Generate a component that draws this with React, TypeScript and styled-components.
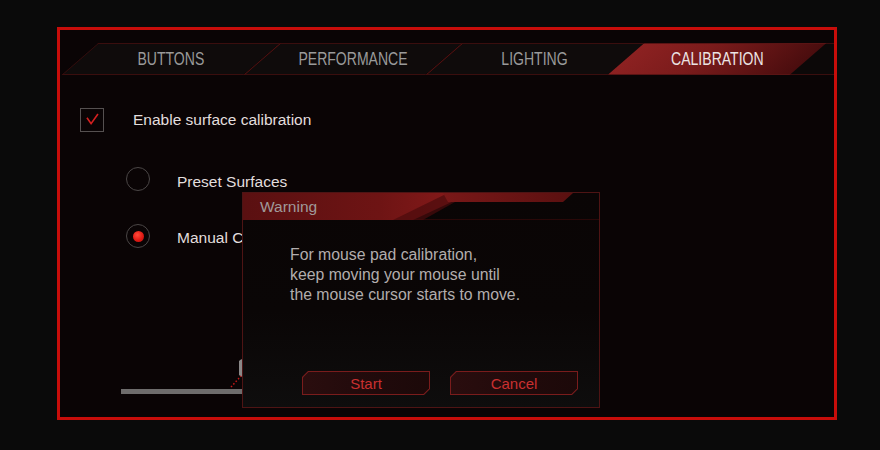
import React from "react";
import styled, { createGlobalStyle, css } from "styled-components";

const GlobalStyle = createGlobalStyle`
  html, body { margin: 0; padding: 0; background: #0a0a0a; }
  body { font-family: "Liberation Sans", Arial, sans-serif; }
  * { box-sizing: border-box; }
`;

const Page = styled.div`
  width: 880px;
  height: 450px;
  padding: 27px 0 0 57px;
  background: #0a0a0a;
`;

const Frame = styled.div`
  position: relative;
  width: 780px;
  height: 393px;
  border: 3px solid #c80d0a;
  background: #0a0405;
  padding-top: 13px;
  overflow: hidden;
`;

const TabBar = styled.div`
  display: flex;
  height: 32px;
  margin-left: 20px;
`;

const Tab = styled.div<{ $active?: boolean; $first?: boolean }>`
  position: relative;
  z-index: 1;
  width: 182px;
  height: 32px;
  display: flex;
  align-items: center;
  justify-content: center;
  &::before {
    content: "";
    position: absolute;
    inset: 0;
    transform: skewX(-49deg);
    background: #0f0b0b;
    border-top: 1px solid #3a0e0e;
    border-bottom: 1px solid #3a0e0e;
    border-left: 1px solid ${(p) => (p.$first ? "#3a0e0e" : "#6a1313")};
  }
  ${(p) =>
    p.$active &&
    css`
      &::before {
        background: linear-gradient(90deg, #8c2121 0%, #7a1b1b 40%, #4a0d0e 100%);
        border-left: none;
        border-bottom: 1px solid #5a1414;
        border-top: 1px solid #5a1414;
      }
    `}
`;

const TabLabel = styled.span<{ $active?: boolean }>`
  position: relative;
  display: inline-block;
  font-size: 18px;
  text-transform: uppercase;
  color: ${(p) => (p.$active ? "#ece4e4" : "#9a9a9a")};
  transform: scaleX(0.78);
  letter-spacing: 0;
`;

const TabFiller = styled.div`
  flex: 1;
  margin-left: -24px;
  height: 32px;
  background: #0c0808;
  border-top: 1px solid #3a0e0e;
  border-bottom: 1px solid #3a0e0e;
`;

const Content = styled.div`
  padding-left: 20px;
`;

const CheckRow = styled.div`
  display: flex;
  align-items: center;
  margin-top: 33px;
  height: 24px;
`;

const CheckBox = styled.div`
  width: 24px;
  height: 24px;
  border: 1.5px solid #555050;
  display: flex;
  align-items: center;
  justify-content: center;
`;

const Label = styled.span<{ $gap: number; $drop?: number }>`
  margin-left: ${(p) => p.$gap}px;
  padding-top: ${(p) => (p.$drop ?? 0) * 2}px;
  font-size: 15.5px;
  color: #e2dede;
`;

const RadioRow = styled.div<{ $top: number }>`
  display: flex;
  align-items: center;
  height: 24px;
  margin-left: 46px;
  margin-top: ${(p) => p.$top}px;
`;

const Radio = styled.div<{ $on?: boolean }>`
  width: 24px;
  height: 24px;
  border-radius: 50%;
  border: 1.5px solid #4a4646;
  display: flex;
  align-items: center;
  justify-content: center;
  &::after {
    content: "";
    display: ${(p) => (p.$on ? "block" : "none")};
    width: 11px;
    height: 11px;
    border-radius: 50%;
    background: radial-gradient(circle at 40% 35%, #ff4a3a 0%, #e01a14 55%, #b00d0a 100%);
  }
`;

const SliderArea = styled.div`
  position: relative;
  margin-top: 141px;
  margin-left: 41px;
  width: 300px;
  height: 5px;
`;

const SliderTrack = styled.div`
  height: 5px;
  background: #6e6c6c;
`;

const Thumb = styled.svg`
  position: absolute;
  left: 108px;
  top: -32px;
`;

const Dialog = styled.div`
  position: absolute;
  left: 182px;
  top: 162px;
  width: 358px;
  height: 216px;
  border: 1px solid #4e1414;
  background: linear-gradient(180deg, #0a0505 0%, #0a0606 55%, #0e0d0d 100%);
  display: flex;
  flex-direction: column;
`;

const DialogHeader = styled.div`
  position: relative;
  height: 27px;
  display: flex;
  align-items: center;
  padding-left: 17px;
  border-bottom: 1px solid #2a0808;
`;

const HeaderArt = styled.svg`
  position: absolute;
  left: 0;
  top: 0;
`;

const HeaderTitle = styled.span`
  position: relative;
  padding-top: 2px;
  font-size: 15.5px;
  color: #a09a9a;
`;

const DialogBody = styled.div`
  padding: 25px 0 0 47px;
  font-size: 15.8px;
  line-height: 20px;
  color: #b2adad;
`;

const DialogFooter = styled.div`
  margin-top: auto;
  display: flex;
  gap: 20px;
  padding: 0 0 12px 59px;
`;

const ButtonFrame = styled.div`
  width: 128px;
  height: 24px;
  padding: 1px;
  background: #7a1c1c;
  clip-path: polygon(6px 0, 100% 0, 100% calc(100% - 6px), calc(100% - 6px) 100%, 0 100%, 0 6px);
`;

const ButtonFace = styled.div`
  width: 100%;
  height: 100%;
  display: flex;
  align-items: center;
  justify-content: center;
  font-size: 15px;
  color: #c93030;
  background: linear-gradient(90deg, #2a0d0e 0%, #200a0b 60%, #1c0909 100%);
  clip-path: polygon(5.5px 0, 100% 0, 100% calc(100% - 5.5px), calc(100% - 5.5px) 100%, 0 100%, 0 5.5px);
`;

const tabs = ["Buttons", "Performance", "Lighting", "Calibration"];

export default function App() {
  return (
    <>
      <GlobalStyle />
      <Page>
        <Frame>
          <TabBar>
            {tabs.map((t, i) => (
              <Tab key={t} $first={i === 0} $active={i === 3}>
                <TabLabel $active={i === 3}>{t}</TabLabel>
              </Tab>
            ))}
            <TabFiller />
          </TabBar>
          <Content>
            <CheckRow>
              <CheckBox>
                <svg width="24" height="24" viewBox="0 0 24 24">
                  <path d="M6.5 9.5 L11 16 L18.5 5.5" fill="none" stroke="#d42020" strokeWidth="1.8" />
                </svg>
              </CheckBox>
              <Label $gap={29}>Enable surface calibration</Label>
            </CheckRow>
            <RadioRow $top={35}>
              <Radio />
              <Label $gap={27} $drop={3}>Preset Surfaces</Label>
            </RadioRow>
            <RadioRow $top={33}>
              <Radio $on />
              <Label $gap={27} $drop={2}>Manual Calibration</Label>
            </RadioRow>
            <SliderArea>
              <SliderTrack />
              <Thumb width="30" height="32" viewBox="0 0 30 32">
                <path d="M10 4 C14 0 22 0 24 6 L24 18 C22 22 14 22 10 18 Z" fill="#8a8888" />
                <line x1="2" y1="30" x2="12" y2="19" stroke="#c41818" strokeWidth="1.5" strokeDasharray="1.5 2" />
              </Thumb>
            </SliderArea>
          </Content>
          <Dialog>
            <DialogHeader>
              <HeaderArt width="356" height="27" viewBox="0 0 356 27">
                <defs>
                  <linearGradient id="hg" x1="0" y1="0" x2="1" y2="0">
                    <stop offset="0" stopColor="#5a1011" />
                    <stop offset="0.6" stopColor="#6e1414" />
                    <stop offset="1" stopColor="#8a1b1b" />
                  </linearGradient>
                  <linearGradient id="hs" x1="0" y1="0" x2="1" y2="0">
                    <stop offset="0" stopColor="#7a1818" />
                    <stop offset="1" stopColor="#5a1010" />
                  </linearGradient>
                </defs>
                <polygon points="0,0 228,0 170,27 0,27" fill="url(#hg)" />
                <polygon points="150,27 205,0 228,0 180,27" fill="#4a0c0d" opacity="0.7" />
                <polygon points="200,0 330,0 320,9 205,9" fill="url(#hs)" />
              </HeaderArt>
              <HeaderTitle>Warning</HeaderTitle>
            </DialogHeader>
            <DialogBody>
              For mouse pad calibration,
              <br />
              keep moving your mouse until
              <br />
              the mouse cursor starts to move.
            </DialogBody>
            <DialogFooter>
              <ButtonFrame>
                <ButtonFace>Start</ButtonFace>
              </ButtonFrame>
              <ButtonFrame>
                <ButtonFace>Cancel</ButtonFace>
              </ButtonFrame>
            </DialogFooter>
          </Dialog>
        </Frame>
      </Page>
    </>
  );
}
